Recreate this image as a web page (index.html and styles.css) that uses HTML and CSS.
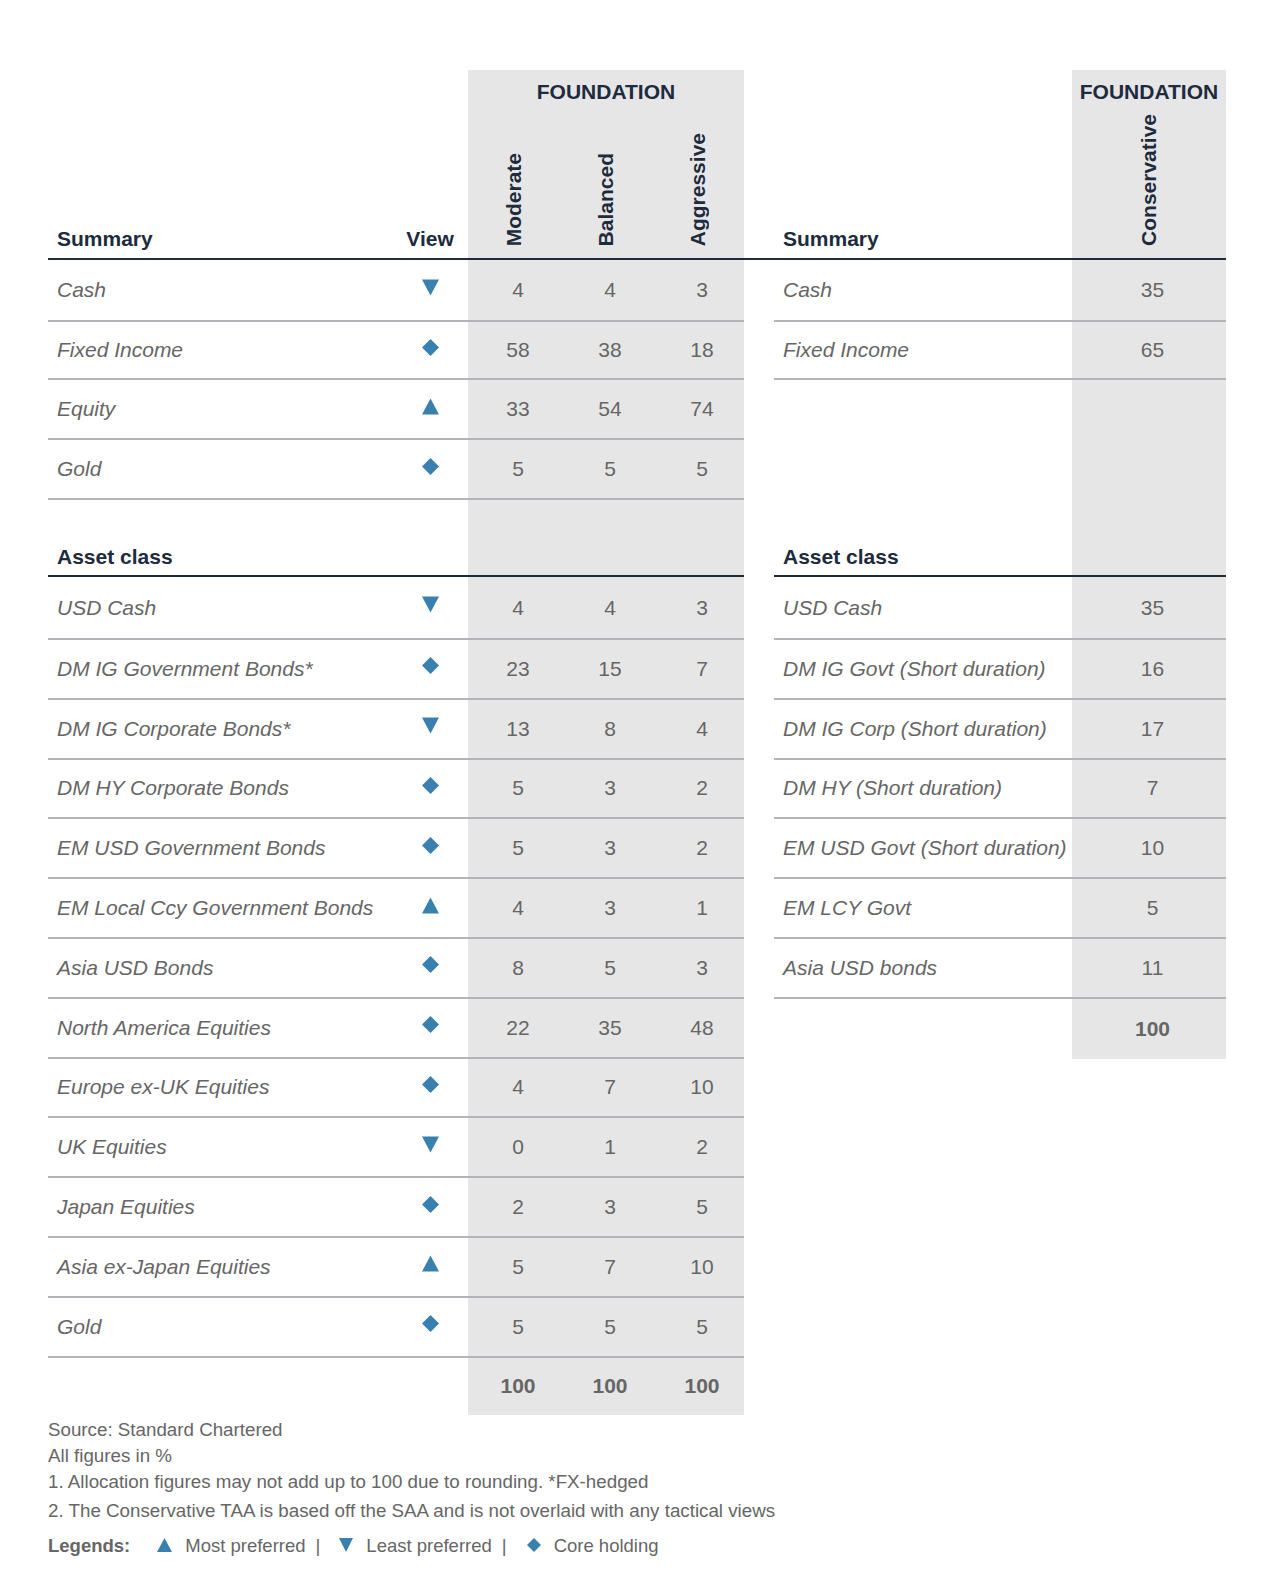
FILE: index.html
```html
<!DOCTYPE html>
<html lang="en">
<head>
<meta charset="utf-8">
<title>Foundation allocation</title>
<link rel="stylesheet" href="styles.css">
</head>
<body>
<div class="page">
  <div class="sheet">
    <div class="head">
      <div class="h-label">Summary</div>
      <div class="h-view">View</div>
      <div class="h-group grey">FOUNDATION</div>
      <div class="h-gap"></div>
      <div class="h-label">Summary</div>
      <div class="h-group one grey">FOUNDATION</div>
      <div class="h-rot grey"><span>Moderate</span></div>
      <div class="h-rot grey"><span>Balanced</span></div>
      <div class="h-rot grey"><span>Aggressive</span></div>
      <div class="h-rot grey"><span>Conservative</span></div>
    </div>

    <!-- Summary rows -->
    <div class="row h62">
      <div class="c lab ln">Cash</div>
      <div class="c view ln"><svg class="ic" viewBox="0 0 17 17"><path d="M0 0.5H17L8.5 16.5Z"/></svg></div>
      <div class="c num grey ln">4</div><div class="c num grey ln">4</div><div class="c num grey ln">3</div>
      <div class="c gap"></div>
      <div class="c lab ln">Cash</div>
      <div class="c num2 grey ln">35</div>
    </div>
    <div class="row h58">
      <div class="c lab ln">Fixed Income</div>
      <div class="c view ln"><svg class="ic" viewBox="0 0 17 17"><path d="M8.5 0L17 8.5L8.5 17L0 8.5Z"/></svg></div>
      <div class="c num grey ln">58</div><div class="c num grey ln">38</div><div class="c num grey ln">18</div>
      <div class="c gap"></div>
      <div class="c lab ln">Fixed Income</div>
      <div class="c num2 grey ln">65</div>
    </div>
    <div class="row">
      <div class="c lab ln">Equity</div>
      <div class="c view ln"><svg class="ic" viewBox="0 0 17 17"><path d="M8.5 0.5L17 16.5H0Z"/></svg></div>
      <div class="c num grey ln">33</div><div class="c num grey ln">54</div><div class="c num grey ln">74</div>
      <div class="c gap"></div>
      <div class="c lab"></div>
      <div class="c num2 grey"></div>
    </div>
    <div class="row">
      <div class="c lab ln">Gold</div>
      <div class="c view ln"><svg class="ic" viewBox="0 0 17 17"><path d="M8.5 0L17 8.5L8.5 17L0 8.5Z"/></svg></div>
      <div class="c num grey ln">5</div><div class="c num grey ln">5</div><div class="c num grey ln">5</div>
      <div class="c gap"></div>
      <div class="c lab"></div>
      <div class="c num2 grey"></div>
    </div>

    <!-- Asset class header -->
    <div class="row h77">
      <div class="c sec nv">Asset class</div>
      <div class="c nv"></div>
      <div class="c grey nv"></div><div class="c grey nv"></div><div class="c grey nv"></div>
      <div class="c gap"></div>
      <div class="c sec nv">Asset class</div>
      <div class="c grey nv"></div>
    </div>

    <div class="row h63">
      <div class="c lab ln">USD Cash</div>
      <div class="c view ln"><svg class="ic" viewBox="0 0 17 17"><path d="M0 0.5H17L8.5 16.5Z"/></svg></div>
      <div class="c num grey ln">4</div><div class="c num grey ln">4</div><div class="c num grey ln">3</div>
      <div class="c gap"></div>
      <div class="c lab ln">USD Cash</div>
      <div class="c num2 grey ln">35</div>
    </div>
    <div class="row hr">
      <div class="c lab ln">DM IG Government Bonds*</div>
      <div class="c view ln"><svg class="ic" viewBox="0 0 17 17"><path d="M8.5 0L17 8.5L8.5 17L0 8.5Z"/></svg></div>
      <div class="c num grey ln">23</div><div class="c num grey ln">15</div><div class="c num grey ln">7</div>
      <div class="c gap"></div>
      <div class="c lab ln">DM IG Govt (Short duration)</div>
      <div class="c num2 grey ln">16</div>
    </div>
    <div class="row hr">
      <div class="c lab ln">DM IG Corporate Bonds*</div>
      <div class="c view ln"><svg class="ic" viewBox="0 0 17 17"><path d="M0 0.5H17L8.5 16.5Z"/></svg></div>
      <div class="c num grey ln">13</div><div class="c num grey ln">8</div><div class="c num grey ln">4</div>
      <div class="c gap"></div>
      <div class="c lab ln">DM IG Corp (Short duration)</div>
      <div class="c num2 grey ln">17</div>
    </div>
    <div class="row hr">
      <div class="c lab ln">DM HY Corporate Bonds</div>
      <div class="c view ln"><svg class="ic" viewBox="0 0 17 17"><path d="M8.5 0L17 8.5L8.5 17L0 8.5Z"/></svg></div>
      <div class="c num grey ln">5</div><div class="c num grey ln">3</div><div class="c num grey ln">2</div>
      <div class="c gap"></div>
      <div class="c lab ln">DM HY (Short duration)</div>
      <div class="c num2 grey ln">7</div>
    </div>
    <div class="row hr">
      <div class="c lab ln">EM USD Government Bonds</div>
      <div class="c view ln"><svg class="ic" viewBox="0 0 17 17"><path d="M8.5 0L17 8.5L8.5 17L0 8.5Z"/></svg></div>
      <div class="c num grey ln">5</div><div class="c num grey ln">3</div><div class="c num grey ln">2</div>
      <div class="c gap"></div>
      <div class="c lab ln">EM USD Govt (Short duration)</div>
      <div class="c num2 grey ln">10</div>
    </div>
    <div class="row hr">
      <div class="c lab ln">EM Local Ccy Government Bonds</div>
      <div class="c view ln"><svg class="ic" viewBox="0 0 17 17"><path d="M8.5 0.5L17 16.5H0Z"/></svg></div>
      <div class="c num grey ln">4</div><div class="c num grey ln">3</div><div class="c num grey ln">1</div>
      <div class="c gap"></div>
      <div class="c lab ln">EM LCY Govt</div>
      <div class="c num2 grey ln">5</div>
    </div>
    <div class="row hr">
      <div class="c lab ln">Asia USD Bonds</div>
      <div class="c view ln"><svg class="ic" viewBox="0 0 17 17"><path d="M8.5 0L17 8.5L8.5 17L0 8.5Z"/></svg></div>
      <div class="c num grey ln">8</div><div class="c num grey ln">5</div><div class="c num grey ln">3</div>
      <div class="c gap"></div>
      <div class="c lab ln">Asia USD bonds</div>
      <div class="c num2 grey ln">11</div>
    </div>
    <div class="row hr">
      <div class="c lab ln">North America Equities</div>
      <div class="c view ln"><svg class="ic" viewBox="0 0 17 17"><path d="M8.5 0L17 8.5L8.5 17L0 8.5Z"/></svg></div>
      <div class="c num grey ln">22</div><div class="c num grey ln">35</div><div class="c num grey ln">48</div>
      <div class="c gap"></div>
      <div class="c lab"></div>
      <div class="c num2 grey tot">100</div>
    </div>
    <div class="row hr">
      <div class="c lab ln">Europe ex-UK Equities</div>
      <div class="c view ln"><svg class="ic" viewBox="0 0 17 17"><path d="M8.5 0L17 8.5L8.5 17L0 8.5Z"/></svg></div>
      <div class="c num grey ln">4</div><div class="c num grey ln">7</div><div class="c num grey ln">10</div>
      <div class="c gap"></div><div class="c"></div><div class="c"></div>
    </div>
    <div class="row hr">
      <div class="c lab ln">UK Equities</div>
      <div class="c view ln"><svg class="ic" viewBox="0 0 17 17"><path d="M0 0.5H17L8.5 16.5Z"/></svg></div>
      <div class="c num grey ln">0</div><div class="c num grey ln">1</div><div class="c num grey ln">2</div>
      <div class="c gap"></div><div class="c"></div><div class="c"></div>
    </div>
    <div class="row hr">
      <div class="c lab ln">Japan Equities</div>
      <div class="c view ln"><svg class="ic" viewBox="0 0 17 17"><path d="M8.5 0L17 8.5L8.5 17L0 8.5Z"/></svg></div>
      <div class="c num grey ln">2</div><div class="c num grey ln">3</div><div class="c num grey ln">5</div>
      <div class="c gap"></div><div class="c"></div><div class="c"></div>
    </div>
    <div class="row hr">
      <div class="c lab ln">Asia ex-Japan Equities</div>
      <div class="c view ln"><svg class="ic" viewBox="0 0 17 17"><path d="M8.5 0.5L17 16.5H0Z"/></svg></div>
      <div class="c num grey ln">5</div><div class="c num grey ln">7</div><div class="c num grey ln">10</div>
      <div class="c gap"></div><div class="c"></div><div class="c"></div>
    </div>
    <div class="row hr">
      <div class="c lab ln">Gold</div>
      <div class="c view ln"><svg class="ic" viewBox="0 0 17 17"><path d="M8.5 0L17 8.5L8.5 17L0 8.5Z"/></svg></div>
      <div class="c num grey ln">5</div><div class="c num grey ln">5</div><div class="c num grey ln">5</div>
      <div class="c gap"></div><div class="c"></div><div class="c"></div>
    </div>
    <div class="row htot">
      <div class="c"></div>
      <div class="c"></div>
      <div class="c num grey tot">100</div><div class="c num grey tot">100</div><div class="c num grey tot">100</div>
      <div class="c gap"></div><div class="c"></div><div class="c"></div>
    </div>
  </div>

  <div class="notes">
    <p>Source: Standard Chartered</p>
    <p>All figures in %</p>
    <p>1. Allocation figures may not add up to 100 due to rounding. *FX-hedged</p>
    <p class="n2">2. The Conservative TAA is based off the SAA and is not overlaid with any tactical views</p>
    <div class="legend">
      <span class="lg-title">Legends:</span>
      <svg class="lg-ic up" viewBox="0 0 15 14"><path d="M7.5 0L15 14H0Z"/></svg>
      <span class="lg-txt">Most preferred</span>
      <span class="bar">|</span>
      <svg class="lg-ic dn" viewBox="0 0 14 14"><path d="M0 0H14L7 14Z"/></svg>
      <span class="lg-txt">Least preferred</span>
      <span class="bar">|</span>
      <svg class="lg-ic dm" viewBox="0 0 14 14"><path d="M7 0L14 7L7 14L0 7Z"/></svg>
      <span class="lg-txt">Core holding</span>
    </div>
  </div>
</div>
</body>
</html>
```

FILE: styles.css
```css
* { box-sizing: border-box; }

body {
  margin: 0;
  background: #ffffff;
  font-family: "Liberation Sans", Arial, sans-serif;
}

.page {
  width: 1286px;
  padding: 70px 0 0 48px;
}

.sheet {
  width: 1178px;
}

.head,
.row {
  display: grid;
  grid-template-columns: 344px 76px 92px 92px 92px 30px 298px 154px;
}

.head {
  grid-template-rows: 38px 150px;
  border-bottom: 2px solid #1d2b3d;
  color: #1d2b3d;
  font-weight: 700;
  font-size: 21px;
  line-height: 24px;
}

.grey { background: #e6e6e6; }

.h-label {
  grid-row: span 2;
  display: flex;
  align-items: flex-end;
  padding: 0 0 7px 9px;
}

.h-view {
  grid-row: span 2;
  display: flex;
  align-items: flex-end;
  justify-content: center;
  padding-bottom: 7px;
}

.h-gap { grid-row: span 2; }

.h-group {
  grid-column: span 3;
  text-align: center;
  padding-top: 10px;
}

.h-group.one { grid-column: span 1; }

.h-rot {
  display: flex;
  align-items: flex-end;
  justify-content: center;
  padding-bottom: 12px;
}

.h-rot span {
  writing-mode: vertical-rl;
  transform: rotate(180deg);
  white-space: nowrap;
}

.row { height: 60px; }
.row.h62 { height: 62px; }
.row.h58 { height: 58px; }
.row.h77 { height: 77px; }
.row.h63 { height: 63px; }
.row.hr { height: 59.8px; }
.row.htot { height: 57.5px; }

.c {
  display: flex;
  align-items: center;
  font-size: 21px;
  line-height: 24px;
  color: #666666;
  white-space: nowrap;
}

.ln { border-bottom: 2px solid #b4b4b8; }
.nv { border-bottom: 2px solid #1d2b3d; }

.lab {
  padding-left: 9px;
  font-style: italic;
}

.sec {
  align-items: flex-end;
  padding: 0 0 6px 9px;
  font-weight: 700;
  color: #1d2b3d;
}

.view { justify-content: center; }

.ic {
  width: 17px;
  height: 17px;
  margin-bottom: 6px;
  fill: #3a80af;
}

.num {
  justify-content: center;
  padding-left: 8px;
}

.num2 {
  justify-content: center;
  padding-left: 7px;
}

.tot { font-weight: 700; }

.notes {
  padding-top: 2px;
  font-size: 18.75px;
  line-height: 26px;
  color: #666666;
}

.notes p { margin: 0; }
.notes .n2 { margin-top: 3px; }

.legend {
  display: flex;
  align-items: center;
  margin-top: 9px;
  height: 26px;
  font-size: 18.5px;
}

.lg-title { font-weight: 700; }

.lg-ic {
  fill: #3a80af;
  height: 14px;
  margin-bottom: 3px;
}

.lg-ic.up { width: 15px; margin-left: 27px; }
.lg-ic.dn { width: 14px; margin-left: 19px; }
.lg-ic.dm { width: 14px; margin-left: 20px; }

.lg-txt { margin-left: 13px; }
.bar { margin-left: 10px; }
```
